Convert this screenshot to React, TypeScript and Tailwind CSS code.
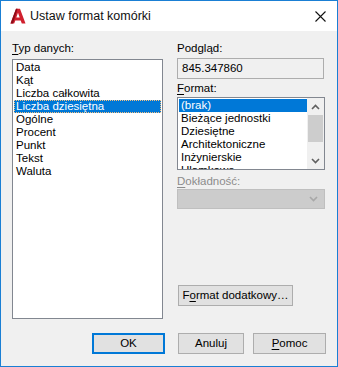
import React from 'react';

const font = { fontFamily: '"Liberation Sans", Arial, sans-serif' };

const types = ['Data', 'Kąt', 'Liczba całkowita', 'Liczba dziesiętna', 'Ogólne', 'Procent', 'Punkt', 'Tekst', 'Waluta'];
const formats = ['(brak)', 'Bieżące jednostki', 'Dziesiętne', 'Architektoniczne', 'Inżynierskie', 'Ułamkowe'];

const AcadIcon = () => (
  <svg width="16" height="16" viewBox="0 0 16 16">
    <path
      fillRule="evenodd"
      d="M0.5 15.5 L6 0.8 L10 0.8 L15.5 15.5 L11.8 15.5 L10.7 12.4 L5.3 12.4 L4.2 15.5 Z M6.3 9.6 L9.7 9.6 L8 4.8 Z"
      fill="#d0202e"
    />
    <path d="M0.5 15.5 L6 0.8 L7.6 0.8 L3 15.5 Z" fill="#8e0b18" />
  </svg>
);

const CloseIcon = () => (
  <svg width="11" height="11" viewBox="0 0 11 11">
    <path d="M0.5 0.5 L10.5 10.5 M10.5 0.5 L0.5 10.5" stroke="#111" strokeWidth="1.1" />
  </svg>
);

const Chevron = ({ up, color = '#606060' }: { up?: boolean; color?: string }) => (
  <svg width="9" height="6" viewBox="0 0 9 6">
    <path d={up ? 'M1 5 L4.5 1.5 L8 5' : 'M1 1 L4.5 4.5 L8 1'} stroke={color} strokeWidth="1.6" fill="none" />
  </svg>
);

const App = () => {
  return (
    <div className="w-[338px] h-[367px] border border-[#1a7fd4] flex flex-col bg-[#f0f0f0] text-[11.5px] text-black" style={font}>
      {/* title bar */}
      <div className="h-[30px] bg-white flex items-center pl-[9px] pr-[10px]">
        <AcadIcon />
        <span className="ml-[4px] text-[12.5px] text-[#111]">Ustaw format komórki</span>
        <div className="ml-auto flex items-center pr-[1px]">
          <CloseIcon />
        </div>
      </div>

      <div className="flex-1 flex flex-col px-[11px] pt-[10px]">
        <div className="flex gap-[14px]">
          {/* left column */}
          <div className="w-[151px] flex flex-col">
            <div className="h-[15px] leading-[15px] mb-[3px]">
              <span className="underline underline-offset-2">T</span>yp danych:
            </div>
            <div className="h-[260px] bg-white border border-[#828790] pt-[1px] px-[1px]">
              {types.map((t, i) => (
                <div
                  key={t}
                  className={
                    i === 3
                      ? 'h-[13px] leading-[11px] pl-[1px] bg-[#0078d7] text-white border border-dotted border-[#f5c080]'
                      : 'h-[13px] leading-[13px] pl-[2px]'
                  }
                >
                  {t}
                </div>
              ))}
            </div>
          </div>

          {/* right column */}
          <div className="w-[147px] flex flex-col">
            <div className="h-[15px] leading-[15px] mb-[2px]">Podgląd:</div>
            <div className="h-[21px] border border-[#adadad] bg-[#f0f0f0] flex items-center pl-[4px]">845.347860</div>
            <div className="h-[15px] leading-[15px] mt-[2px] mb-[1px]">
              <span className="underline underline-offset-2">F</span>ormat:
            </div>
            <div className="h-[73px] w-[148px] bg-white border border-[#828790] flex overflow-hidden">
              <div className="flex-1 pt-[1px] pl-[1px]">
                {formats.map((f, i) => (
                  <div
                    key={f}
                    className={
                      i === 0
                        ? 'h-[13px] leading-[13px] pl-[2px] bg-[#0078d7] text-white'
                        : 'h-[13px] leading-[13px] pl-[2px]'
                    }
                  >
                    {f}
                  </div>
                ))}
              </div>
              <div className="w-[17px] bg-[#f0f0f0] flex flex-col items-center">
                <div className="h-[17px] w-full flex items-center justify-center">
                  <Chevron up />
                </div>
                <div className="h-[27px] w-[15px] bg-[#cdcdcd]" />
                <div className="flex-1" />
                <div className="h-[17px] w-full flex items-center justify-center">
                  <Chevron />
                </div>
              </div>
            </div>
            <div className="h-[15px] leading-[15px] mt-[4px] text-[#8c8c8c]">
              <span className="underline underline-offset-2">D</span>okładność:
            </div>
            <div className="h-[20px] w-[148px] bg-[#cccccc] border border-[#bfbfbf] flex items-center justify-end pr-[6px]">
              <Chevron color="#a8a8a8" />
            </div>
            <button className="mt-[76px] ml-[1px] h-[21px] w-[115px] bg-[#e1e1e1] border border-[#adadad] text-[11.5px]">
              F<span className="underline underline-offset-2">o</span>rmat dodatkowy…
            </button>
          </div>
        </div>

        {/* bottom buttons */}
        <div className="flex mt-[14px] pl-[80px]">
          <button className="h-[21px] w-[74px] bg-[#e1e1e1] border-2 border-[#0078d7] text-[11.5px]">OK</button>
          <button className="ml-[13px] h-[21px] w-[67px] bg-[#e1e1e1] border border-[#adadad] text-[11.5px]">Anuluj</button>
          <button className="ml-[9px] h-[21px] w-[74px] bg-[#e1e1e1] border border-[#adadad] text-[11.5px]">
            <span className="underline underline-offset-2">P</span>omoc
          </button>
        </div>
      </div>
    </div>
  );
};

export default App;
